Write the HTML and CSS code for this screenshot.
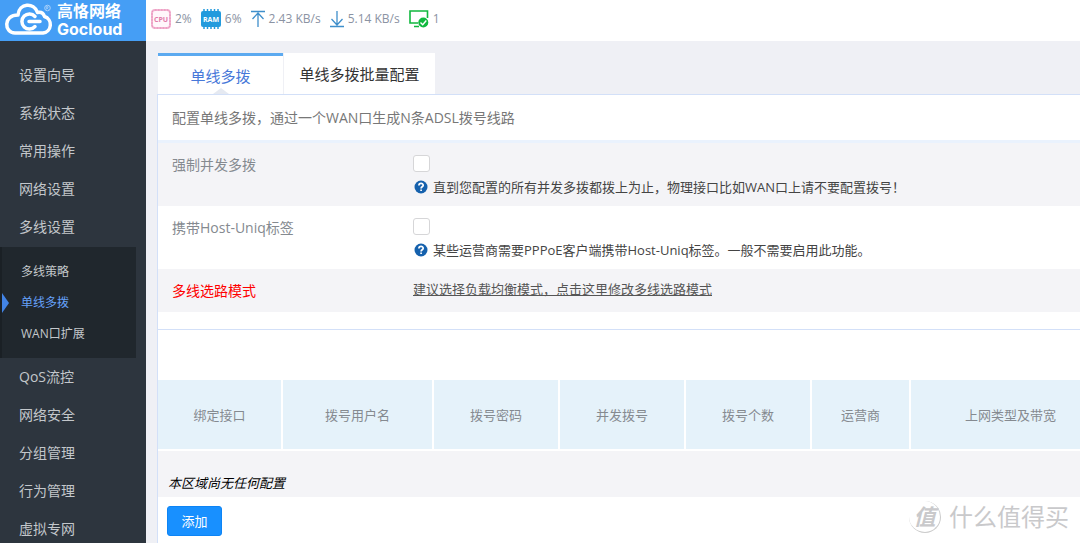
FILE: index.html
```html
<!DOCTYPE html>
<html lang="zh-CN">
<head>
<meta charset="utf-8">
<meta name="viewport" content="width=device-width, initial-scale=1">
<title>单线多拨</title>
<link rel="stylesheet" href="styles.css">
</head>
<body>
<div class="app">
  <aside class="sidebar">
    <div class="brand">
      <svg class="brand-mark" viewBox="0 0 52 38" width="52" height="38" aria-hidden="true">
        <path d="M11 31H39A8.500 8.500 0 0 0 40.500 14.500C39 10 36 10 33.500 10.500C30 0 15 1 14 13C-1 13 0 31 11 31Z" fill="none" stroke="#fff" stroke-width="3.500" stroke-linejoin="round"/>
        <path d="M31 14.500A7.500 7.500 0 1 0 31 24.500M25 19.500H36" fill="none" stroke="#fff" stroke-width="3.500" stroke-linecap="round"/>
        <circle cx="43.500" cy="6" r="2.800" fill="none" stroke="#a7d0fb"/>
        <path d="M42.500 7.500V4.500H44V6H43L44.500 7.500" fill="none" stroke="#a7d0fb" stroke-width=".7"/>
      </svg>
      <div class="brand-name"><span class="brand-cn">高恪网络</span><span class="brand-en">Gocloud</span></div>
    </div>
    <nav class="menu">
      <a href="#">设置向导</a>
      <a href="#">系统状态</a>
      <a href="#">常用操作</a>
      <a href="#">网络设置</a>
      <a href="#">多线设置</a>
      <div class="submenu">
        <a href="#">多线策略</a>
        <a href="#" class="current">单线多拨</a>
        <a href="#">WAN口扩展</a>
      </div>
      <a href="#">QoS流控</a>
      <a href="#">网络安全</a>
      <a href="#">分组管理</a>
      <a href="#">行为管理</a>
      <a href="#">虚拟专网</a>
    </nav>
  </aside>
  <div class="content">
    <header class="status">
      <div class="stat">
        <svg viewBox="0 0 20 20" width="20" height="20" aria-label="CPU"><rect x="1" y="1" width="18" height="18" rx="3" fill="#fff7fb" stroke="#f3b5d2" stroke-width="2"/><rect x="1" y="1" width="18" height="18" rx="3" fill="none" stroke="#e58db7" stroke-dasharray="1.500 1.500"/><text x="10" y="12.500" text-anchor="middle" class="chip-label cpu">CPU</text></svg>
        <span>2%</span>
      </div>
      <div class="stat">
        <svg viewBox="0 0 20 20" width="20" height="20" aria-label="RAM"><rect y="2" width="20" height="16" rx="2" fill="#239bdd"/><path d="M3 0V20M6.500 0V20M10 0V20M13.500 0V20M17 0V20" stroke="#239bdd" stroke-width="1.500"/><text x="10" y="12.500" text-anchor="middle" class="chip-label ram-text">RAM</text></svg>
        <span>6%</span>
      </div>
      <div class="stat">
        <svg viewBox="0 0 14 18" width="14" height="18" fill="none" stroke="#3f8fcb" stroke-width="1.300" aria-hidden="true"><path d="M0 1.500H14M7 17V3M1.500 9L7 3L12.500 9"/></svg>
        <span>2.43 KB/s</span>
      </div>
      <div class="stat">
        <svg viewBox="0 0 14 18" width="14" height="18" fill="none" stroke="#3f8fcb" stroke-width="1.300" aria-hidden="true"><path d="M0 16.500H14M7 1V15M1.500 9L7 15L12.500 9"/></svg>
        <span>5.14 KB/s</span>
      </div>
      <div class="stat">
        <svg viewBox="0 0 20 18" width="20" height="18" fill="none" aria-hidden="true"><path d="M18.500 8V1H1V13H9M5 16.500H10" stroke="#10b83e" stroke-width="1.600"/><circle cx="14.300" cy="12.500" r="5" fill="#10b83e"/><path d="M11.500 12.500L13.700 14.700L17.300 10.500" stroke="#fff" stroke-width="1.400"/></svg>
        <span>1</span>
      </div>
    </header>
    <main class="page">
      <nav class="tabs">
        <a href="#" class="tab active">单线多拨</a>
        <a href="#" class="tab">单线多拨批量配置</a>
      </nav>
      <section class="panel">
        <p class="intro">配置单线多拨，通过一个WAN口生成N条ADSL拨号线路</p>
        <div class="row shaded">
          <label class="label" for="force">强制并发多拨</label>
          <div class="field">
            <input type="checkbox" class="check" id="force">
            <p class="hint"><svg viewBox="0 0 14 14" width="14" height="14" aria-hidden="true"><circle cx="7" cy="7" r="6.500" fill="#1561ad"/><path d="M4.900 5.500C4.900 2.700 9.200 2.700 9.200 5.300C9.200 6.900 7.100 6.700 7.100 8.400M7.100 9.500V11" fill="none" stroke="#fff" stroke-width="1.700"/></svg>直到您配置的所有并发多拨都拨上为止，物理接口比如WAN口上请不要配置拨号！</p>
          </div>
        </div>
        <div class="row">
          <label class="label" for="uniq">携带Host-Uniq标签</label>
          <div class="field">
            <input type="checkbox" class="check" id="uniq">
            <p class="hint"><svg viewBox="0 0 14 14" width="14" height="14" aria-hidden="true"><circle cx="7" cy="7" r="6.500" fill="#1561ad"/><path d="M4.900 5.500C4.900 2.700 9.200 2.700 9.200 5.300C9.200 6.900 7.100 6.700 7.100 8.400M7.100 9.500V11" fill="none" stroke="#fff" stroke-width="1.700"/></svg>某些运营商需要PPPoE客户端携带Host-Uniq标签。一般不需要启用此功能。</p>
          </div>
        </div>
        <div class="row shaded">
          <span class="label warn">多线选路模式</span>
          <div class="field"><a href="#" class="mode-link">建议选择负载均衡模式，点击这里修改多线选路模式</a></div>
        </div>
      </section>
      <section class="panel list">
        <table class="grid">
          <colgroup><col class="c-port"><col class="c-user"><col class="c-mid"><col class="c-mid"><col class="c-mid"><col class="c-isp"><col class="c-type"></colgroup>
          <thead><tr><th>绑定接口</th><th>拨号用户名</th><th>拨号密码</th><th>并发拨号</th><th>拨号个数</th><th>运营商</th><th>上网类型及带宽</th></tr></thead>
          <tbody><tr><td colspan="7"><em>本区域尚无任何配置</em></td></tr></tbody>
        </table>
        <div class="actions"><button type="button" class="add">添加</button></div>
      </section>
    </main>
  </div>
</div>
<div class="watermark"><span class="seal">值</span><span>什么值得买</span></div>
</body>
</html>
```

FILE: styles.css
```css
* { box-sizing: border-box; }
body {
  margin: 0;
  background: #eff0f5;
  color: #444;
  font: 13px/20px "Open Sans", "Noto Sans CJK SC", sans-serif;
}
p { margin: 0; }
a { color: inherit; text-decoration: none; }
svg { display: block; flex: none; }
.app { display: flex; height: 100vh; overflow: hidden; }

.sidebar { flex: none; width: 146px; background: #2d353e; color: #c3c7cb; }
.brand { display: flex; align-items: center; height: 41px; padding-left: 4px; background: #459ef5; color: #fff; }
.brand-name { display: flex; flex-direction: column; font-weight: 700; font-size: 16px; }
.brand-cn { line-height: 20px; }
.brand-en { font-family: Inter, sans-serif; line-height: 16px; margin-bottom: 4px; }
.brand-mark { margin-right: 1px; }
.menu { padding-top: 15px; }
.menu > a { display: block; padding-left: 19px; font-size: 14px; line-height: 38px; }
.submenu { margin: 1px 10px 0 0; padding: 9px 0; background: #20272d; font-size: 12px; border-left: 2px solid #1a2025; }
.submenu a { display: block; padding-left: 19px; line-height: 31px; }
.submenu .current { position: relative; color: #65a1fa; }
.submenu .current::before {
  content: "";
  position: absolute;
  left: 0;
  top: 6px;
  border: solid transparent;
  border-width: 10px 0 10px 7px;
  border-left-color: #4284e6;
}

.content { flex: 1; min-width: 0; }
.status { display: flex; align-items: center; gap: 9px; height: 41px; padding: 0 0 4px 5px; background: #fff; color: #8b93a3; font-size: 12px; }
.stat { display: flex; align-items: center; gap: 4px; }
.chip-label { font: 700 7px "Open Sans", sans-serif; }
.cpu { fill: #e27dab; }
.ram-text { fill: #fff; }

.page { padding: 12px 0 0 12px; }
.tabs { display: flex; height: 41px; gap: 1px; }
.tab { height: 41px; padding: 0 14px; background: #fff; color: #333; font-size: 15px; line-height: 42px; min-width: 151px; text-align: center; }
.tab.active { position: relative; min-width: 125px; border-top: 3px solid #5caaf0; color: #4778d9; line-height: 40px; }
.tab.active::after {
  content: "";
  position: absolute;
  left: 55px;
  bottom: 0;
  border: solid transparent;
  border-width: 0 8px 6px;
  border-bottom-color: #e5e9f1;
}
.panel { border-top: 1px solid #d3e0f8; border-left: 1px solid #d3e0f8; margin-left: -1px; padding-bottom: 17px; background: #fff; }
.intro { padding: 13px 14px 12px; border-bottom: 3px solid #eaf2fd; color: #777; font-size: 14px; }
.row { display: flex; min-height: 43px; padding: 10px 14px 9px; }
.shaded { background: #f4f4f7; }
.label { flex: none; width: 241px; color: #858a90; font-size: 14px; line-height: 24px; }
.warn { color: #f00; }
.field { flex: 1; }
.check {
  display: block;
  appearance: none;
  width: 17px;
  height: 17px;
  margin: 2px 0 5px;
  border: 1px solid #d6d6d8;
  border-radius: 3px;
  background: #fff;
}
.check:checked { background: #1890ff; }
.hint { display: flex; align-items: center; gap: 5px; }
.hint svg { margin-left: 1px; }
.mode-link { text-decoration: underline; color: #555; }

.list { padding: 50px 0 0; overflow: hidden; }
.grid { width: 954px; min-width: 100%; table-layout: fixed; border-collapse: separate; border-spacing: 0; }
.c-port { width: 125px; }
.c-user { width: 151px; }
.c-mid { width: 126px; }
.c-isp { width: 99px; }
.grid th { height: 71px; padding: 0; border: solid #fff; border-width: 0 2px 2px 0; background: #e5f2fa; color: #858a90; font-weight: 400; }
.grid td { height: 46px; padding: 20px 10px 2px; background: #f4f4f7; color: #000; line-height: 24px; }
.actions { padding: 9px; }
.add { width: 55px; height: 30px; padding: 0; border: 1px solid #0d84f5; border-radius: 3px; background: #1890ff; color: #fff; font: inherit; cursor: pointer; }

.watermark { position: absolute; right: 11px; bottom: 8px; display: flex; align-items: center; gap: 8px; color: #c9c9cb; font-size: 24px; line-height: 36px; pointer-events: none; }
.seal { width: 32px; height: 32px; border-right: 1px solid #ccc; border-bottom: 1px solid #ccc; border-radius: 50%; text-align: center; font-size: 22px; font-style: italic; font-weight: 700; line-height: 30px; }
```
